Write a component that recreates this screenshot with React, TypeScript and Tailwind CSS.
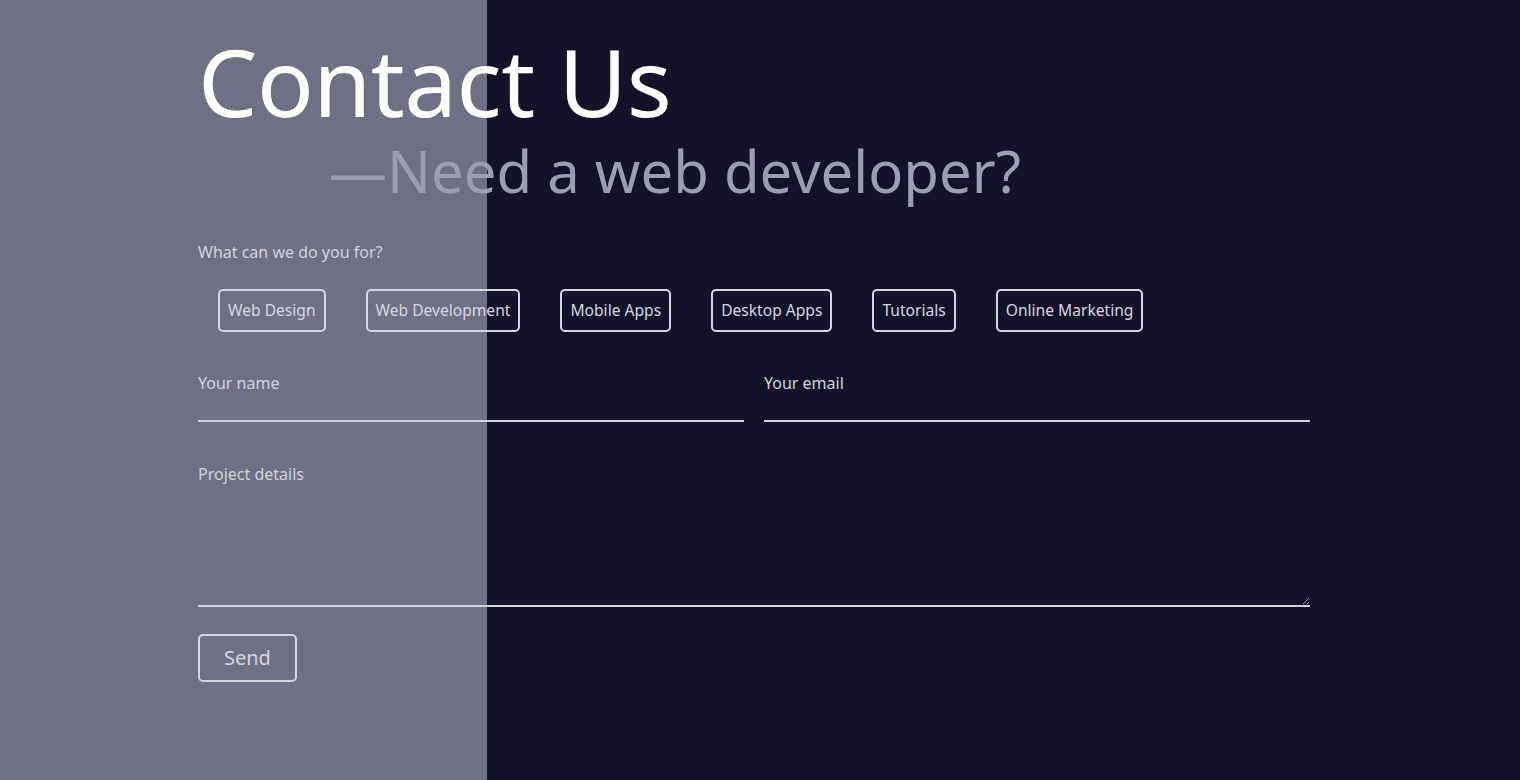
import React from "react";

const services = [
  "Web Design",
  "Web Development",
  "Mobile Apps",
  "Desktop Apps",
  "Tutorials",
  "Online Marketing",
];

export default function App() {
  return (
    <div
      className="min-h-[780px] w-full bg-[linear-gradient(to_right,#6f7084_487px,#141229_487px)] text-white"
      style={{ fontFamily: '"Noto Sans", "Open Sans", sans-serif' }}
    >
      <div className="ml-[198px] w-[1112px] pt-[26px]">
        <h1 className="text-[94px] leading-[110px] font-normal tracking-[-0.5px] text-white">
          Contact Us
        </h1>
        <h2 className="ml-[131px] text-[58px] leading-[70px] text-[#9d9db0]">
          —Need a web developer?
        </h2>

        <form className="mt-[34px]" onSubmit={(e) => e.preventDefault()}>
          <p className="text-base leading-6 text-[#d2d2dc]">What can we do you for?</p>

          <div className="mt-[25px] flex flex-wrap">
            {services.map((s) => (
              <button
                key={s}
                type="button"
                className="mx-5 h-[43px] rounded-[5px] border-2 border-[#d6d6e0] px-2 text-[15.6px] text-[#d6d6e0]"
              >
                {s}
              </button>
            ))}
          </div>

          <div className="mt-[28px] grid grid-cols-2 gap-5">
            <input
              placeholder="Your name"
              className="h-[62px] border-0 border-b-2 border-[#d2d2dc] bg-transparent pb-[14px] text-base text-[#d2d2dc] outline-none placeholder:text-[#d2d2dc]"
            />
            <input
              placeholder="Your email"
              className="h-[62px] border-0 border-b-2 border-[#d2d2dc] bg-transparent pb-[14px] text-base text-[#d2d2dc] outline-none placeholder:text-[#d2d2dc]"
            />
          </div>

          <textarea
            placeholder="Project details"
            className="mt-[27px] block h-[158px] w-full border-0 border-b-2 border-[#d2d2dc] bg-transparent pt-[13px] text-base text-[#d2d2dc] outline-none placeholder:text-[#d2d2dc]"
          />

          <button
            type="submit"
            className="mt-[27px] h-[48px] rounded-[5px] border-2 border-[#d6d6e0] px-6 text-xl text-[#d6d6e0]"
          >
            Send
          </button>
        </form>
      </div>
    </div>
  );
}
